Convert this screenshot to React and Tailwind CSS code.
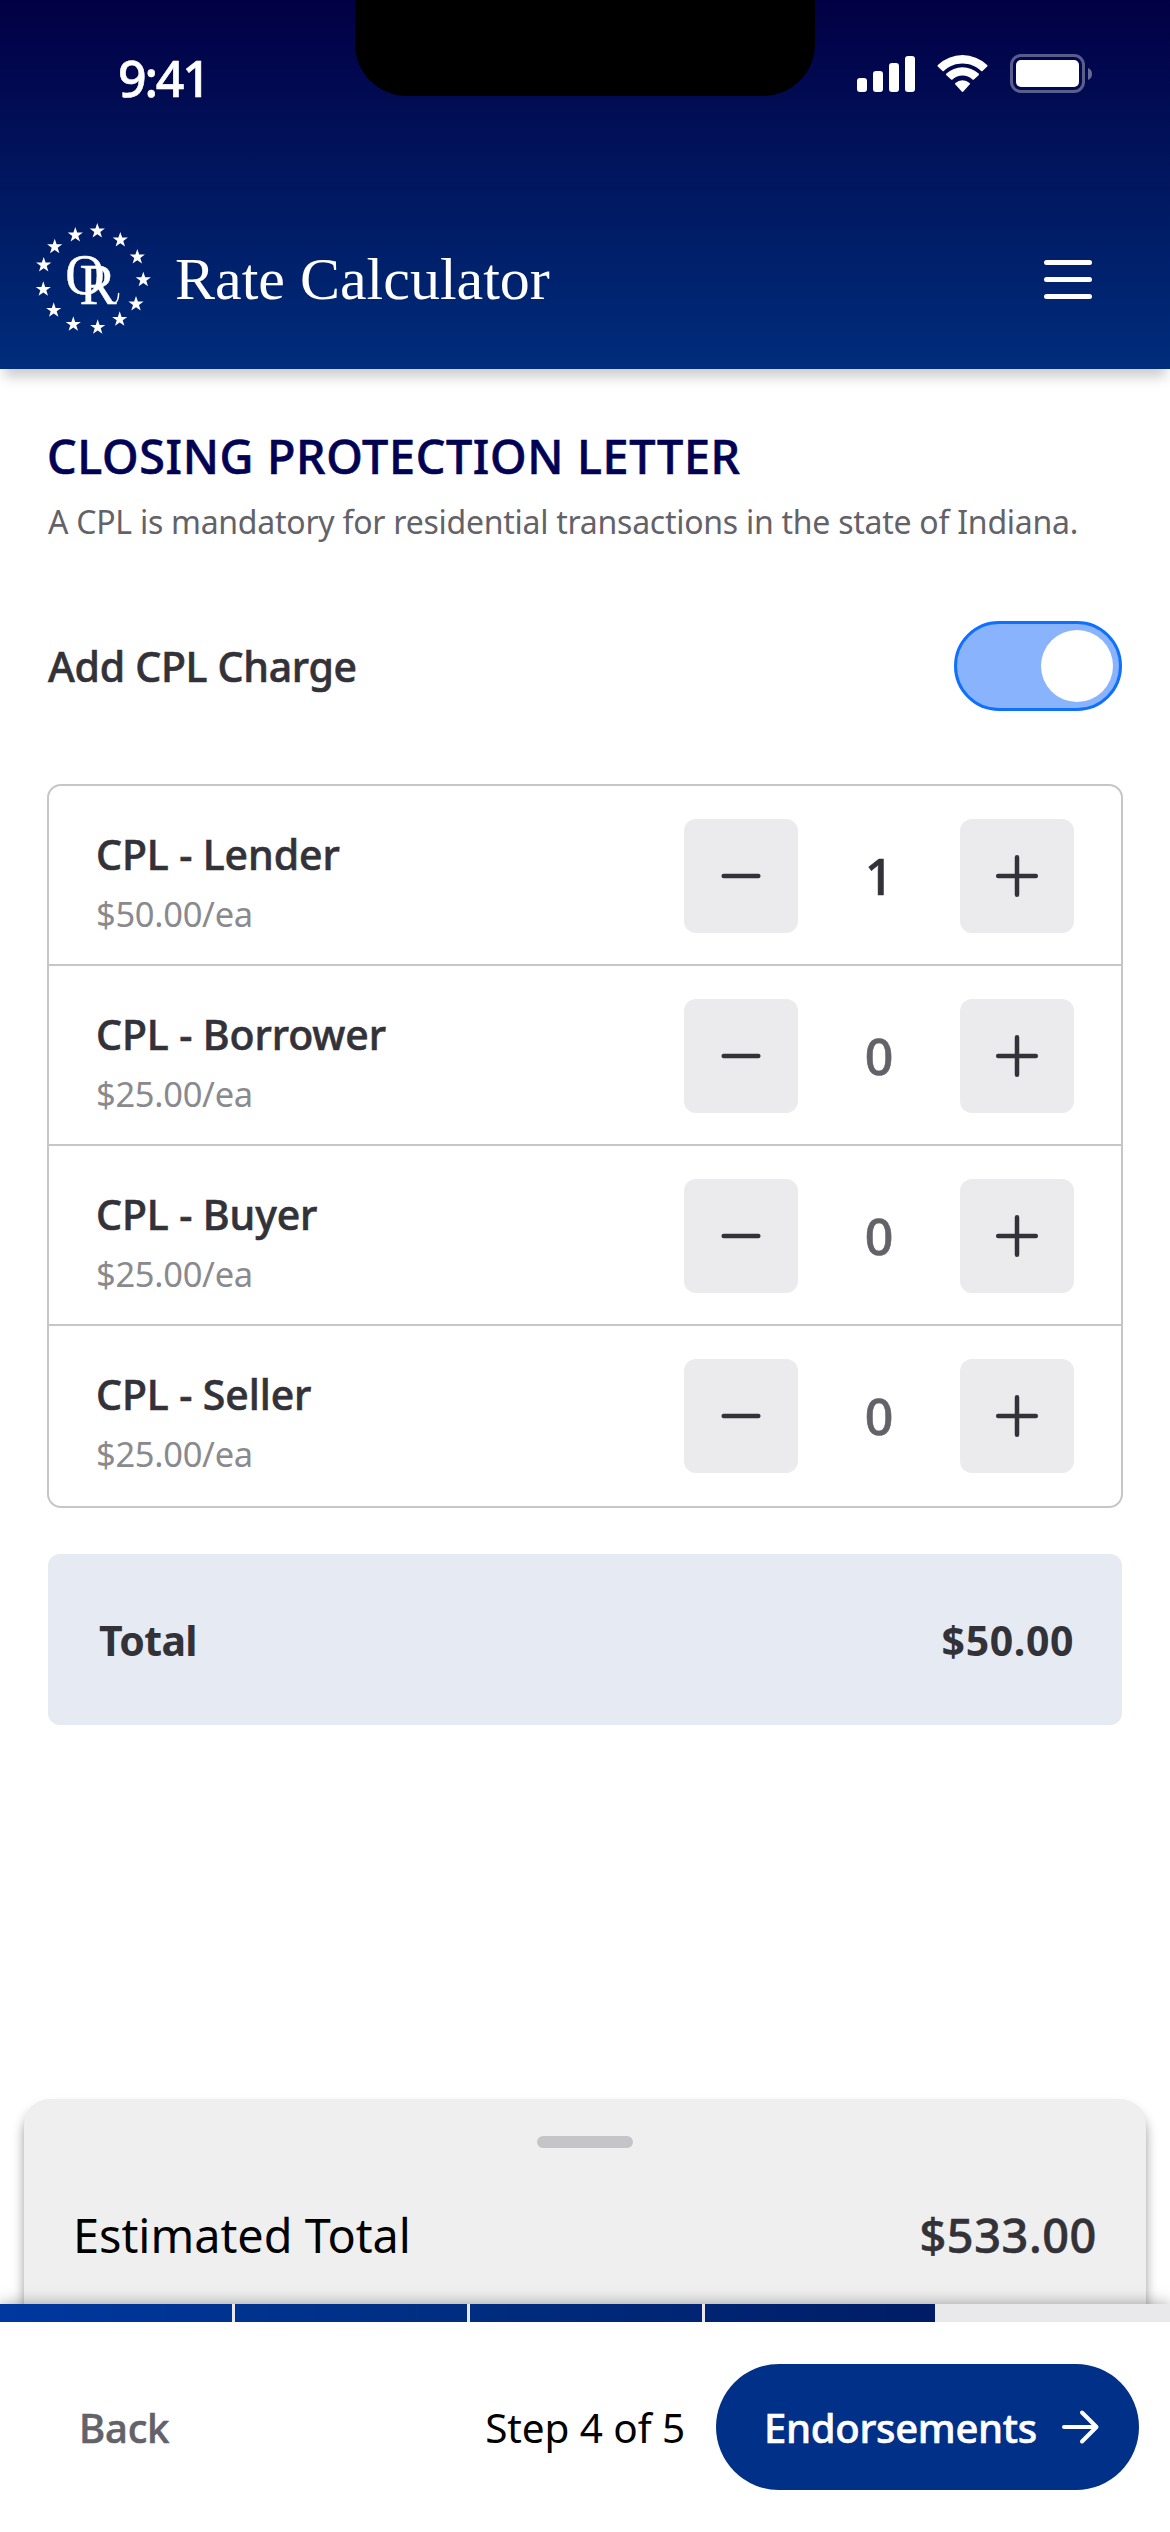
const STARS = [
  [97.3, 231], [120.3, 240], [137.3, 257], [143.3, 279.7], [136, 304], [119.7, 319.3], [97.7, 327.3],
  [73.3, 324.3], [53.7, 310.3], [43.3, 289.3], [43.7, 265], [54.7, 246.7], [75.3, 235],
];

const STAR_PATH = "M0-8 1.9-2.4 7.6-2.4 3 1 4.7 6.5 0 3.2-4.7 6.5-3 1-7.6-2.4-1.9-2.4Z";

const ITEMS = [
  { name: "CPL - Lender", price: "$50.00/ea", count: 1 },
  { name: "CPL - Borrower", price: "$25.00/ea", count: 0 },
  { name: "CPL - Buyer", price: "$25.00/ea", count: 0 },
  { name: "CPL - Seller", price: "$25.00/ea", count: 0 },
];

function Logo() {
  return (
    <svg viewBox="33 220 120 118" className="h-[118px] w-[120px] shrink-0 fill-white">
      {STARS.map(([x, y]) => (
        <path key={`${x}-${y}`} d={STAR_PATH} transform={`translate(${x} ${y})`} />
      ))}
      <g stroke="white" strokeWidth="0.4" className="font-['Liberation_Serif',serif]">
        <text x="65.200" y="294.2" fontSize="58" textLength="39.500" lengthAdjust="spacingAndGlyphs">O</text>
        <text x="79.500" y="303.800" fontSize="58" textLength="37" lengthAdjust="spacingAndGlyphs">R</text>
      </g>
      <path d="M109 301c4.500 4.500 9.500 2 9.600-7.500" fill="none" stroke="white" strokeWidth="1.500" strokeLinecap="round" />
    </svg>
  );
}

function StatusBar() {
  return (
    <div className="flex h-[96px] items-start pr-[78px] pl-[118px]">
      <span className="mt-[48px] w-[237px] text-[50px] leading-[60px] font-medium tracking-[-2.200px] [-webkit-text-stroke:0.6px_currentColor]">9:41</span>
      <div className="h-[96px] w-[460px] rounded-b-[52px] bg-black" />
      <svg viewBox="857 53 235 42" className="mt-[53px] ml-auto h-[42px] w-[235px] fill-white">
        <rect x="857" y="78" width="10" height="14" rx="3" />
        <rect x="873" y="71" width="10" height="21" rx="3" />
        <rect x="889" y="63" width="10" height="29" rx="3" />
        <rect x="905" y="56" width="10" height="36" rx="3" />
        <path d="M962.5 63.5c7 0 13.6 2.7 18.600 7.400.4.4 1 .4 1.400 0l4.700-4.400c.4-.4.4-1.100 0-1.600a36 36 0 0 0-49.400 0c-.4.5-.4 1.200 0 1.600l4.700 4.400c.4.4 1 .4 1.400 0 5-4.700 11.600-7.400 18.600-7.400Z" />
        <path d="M962.5 75.600c3.700 0 7.300 1.400 10 3.900.4.400 1 .4 1.400 0l4.700-4.300c.5-.5.5-1.200 0-1.600a23.700 23.700 0 0 0-32.200 0c-.5.4-.5 1.100 0 1.600l4.700 4.300c.4.400 1 .4 1.400 0 2.700-2.500 6.300-3.900 10-3.900Z" />
        <path d="M969.600 84.500c.5-.5.5-1.200 0-1.600a10.900 10.900 0 0 0-14.200 0c-.5.4-.5 1.100 0 1.600l6.300 7c.4.500 1.200.500 1.600 0Z" />
        <rect x="1011.500" y="55.500" width="72" height="36" rx="9.500" fill="none" stroke="white" strokeOpacity=".35" strokeWidth="3" />
        <rect x="1016" y="60" width="63" height="27" rx="5" />
        <path d="M1088 68v12a6.500 6.500 0 0 0 0-12Z" fillOpacity=".4" />
      </svg>
    </div>
  );
}

function Header() {
  return (
    <header className="relative z-10 h-[369px] bg-linear-to-b from-[#020044] to-[#002d7c] text-white shadow-[0_12px_12px_-4px_rgba(0,0,0,0.2)]">
      <StatusBar />
      <div className="mt-[124px] flex h-[118px] items-center pr-[78px] pl-[33px]">
        <Logo />
        <h1 className="ml-[22px] font-['Liberation_Serif',serif] text-[60px] leading-[72px] whitespace-nowrap">Rate Calculator</h1>
        <div className="ml-auto flex flex-col gap-[12px]">
          <i className="h-[5px] w-[48px] rounded-full bg-white" />
          <i className="h-[5px] w-[48px] rounded-full bg-white" />
          <i className="h-[5px] w-[48px] rounded-full bg-white" />
        </div>
      </div>
    </header>
  );
}

function StepButton({ plus }) {
  return (
    <button className="flex size-[114px] items-center justify-center rounded-[12px] bg-[#ebebed]">
      <svg viewBox="0 0 48 48" className="size-[48px] stroke-[#333238]" strokeWidth="4.500" strokeLinecap="round">
        {plus ? <path d="M5.200 24H42.800M24 5.200V42.800" /> : <path d="M6.700 24H41.300" />}
      </svg>
    </button>
  );
}

function Item({ name, price, count }) {
  return (
    <li className="flex h-[180px] items-start justify-between border-b-2 border-[#c6c6c9] pr-[47px] pl-[47px] last:border-b-0">
      <div className="pt-[38px]">
        <p className="text-[41px] leading-[60px] font-medium tracking-[-0.1px] text-[#333238] [-webkit-text-stroke:0.6px_currentColor]">{name}</p>
        <p className="text-[34.5px] leading-[60px] tracking-[-0.3px] text-[#8a8a8e]">{price}</p>
      </div>
      <div className="mt-[33px] flex items-center">
        <StepButton />
        <span className={count ? "w-[162px] text-center text-[50px] leading-[60px] font-medium text-[#333238] [-webkit-text-stroke:0.6px_currentColor]" : "w-[162px] text-center text-[50px] leading-[60px] font-medium text-[#636269] [-webkit-text-stroke:0.6px_currentColor]"}>{count}</span>
        <StepButton plus />
      </div>
    </li>
  );
}

function Footer() {
  return (
    <footer className="relative h-[228px] bg-white shadow-[0_0_15px_rgba(0,0,0,0.35)]">
      <div className="h-[18px] bg-[#e9e9eb]">
        <div className="flex h-full w-[935px] bg-linear-to-r from-[#0038a0] via-[#002d80] to-[#001c66]">
          <i className="mr-[232px]" />
          <i className="mr-[232px] w-[3px] bg-[#e9e9eb]" />
          <i className="mr-[232px] w-[3px] bg-[#e9e9eb]" />
          <i className="w-[3px] bg-[#e9e9eb]" />
        </div>
      </div>
      <div className="flex items-center pt-[42px] pr-[31px] pl-[79px]">
        <span className="pt-px text-[40px] leading-[60px] font-medium tracking-[-0.2px] text-[#636269] [-webkit-text-stroke:0.6px_currentColor]">Back</span>
        <span className="mr-[31px] ml-auto pt-px text-[40.500px] leading-[60px] tracking-[-0.1px] text-black">Step 4 of 5</span>
        <button className="flex h-[126px] w-[423px] items-center justify-between rounded-full bg-[#003087] pr-[37px] pl-[48px] text-white">
          <span className="pt-px text-[40px] leading-[60px] font-medium tracking-[-0.3px] [-webkit-text-stroke:0.6px_currentColor]">Endorsements</span>
          <svg viewBox="0 0 44 44" className="size-[44px]" fill="none" stroke="white" strokeWidth="4" strokeLinecap="round" strokeLinejoin="round">
            <path d="M6 22H38M24 7.500 38.500 22 24 36.500" />
          </svg>
        </button>
      </div>
    </footer>
  );
}

export default function App() {
  return (
    <div className="flex h-[2532px] w-[1170px] flex-col overflow-hidden bg-white font-['Noto_Sans',sans-serif]">
      <Header />
      <main className="flex-1 px-[47px] pt-[57px]">
        <h2 className="text-[46.700px] leading-[60px] font-medium tracking-[0.650px] text-[#020255] [-webkit-text-stroke:0.6px_currentColor]">CLOSING PROTECTION LETTER</h2>
        <p className="mt-[12px] ml-px text-[32px] leading-[48px] tracking-[-0.26px] whitespace-nowrap text-[#636269]">
          A CPL is mandatory for residential transactions in the state of Indiana.
        </p>
        <div className="mt-[75px] flex h-[90px] items-center justify-between pr-px pl-px">
          <span className="text-[41px] leading-[60px] font-medium tracking-[-0.3px] text-[#333238] [-webkit-text-stroke:0.6px_currentColor]">Add CPL Charge</span>
          <div className="flex h-[90px] w-[168px] items-center justify-end rounded-full border-3 border-[#0f6fff] bg-[#89b4fd] pr-[6px]">
            <div className="size-[72px] rounded-full bg-white" />
          </div>
        </div>
        <ul className="mt-[73px] rounded-[14px] border-2 border-[#c6c6c9]">
          {ITEMS.map((item) => (
            <Item key={item.name} {...item} />
          ))}
        </ul>
        <div className="mx-px mt-[46px] flex h-[171px] items-center justify-between rounded-[12px] bg-[#e5eaf3] pr-[48px] pl-[51px] text-[41px] leading-[60px] font-bold text-[#333238]">
          <span className="tracking-[-0.6px]">Total</span>
          <span className="tracking-[0.6px]">$50.00</span>
        </div>
      </main>
      <section className="mx-[24px] h-[205px] rounded-t-[26px] bg-[#efefef] pt-[37px] shadow-[0_9px_12px_rgba(0,0,0,0.4)]">
        <div className="mx-auto h-[12px] w-[96px] rounded-full bg-[#c5c5c7]" />
        <div className="mt-[57px] flex items-center justify-between pr-[49px] pl-[49px] text-[46.800px] leading-[60px]">
          <span className="text-black">Estimated Total</span>
          <span className="font-medium tracking-[0.6px] text-[#333238] [-webkit-text-stroke:0.6px_currentColor]">$533.00</span>
        </div>
      </section>
      <Footer />
    </div>
  );
}
